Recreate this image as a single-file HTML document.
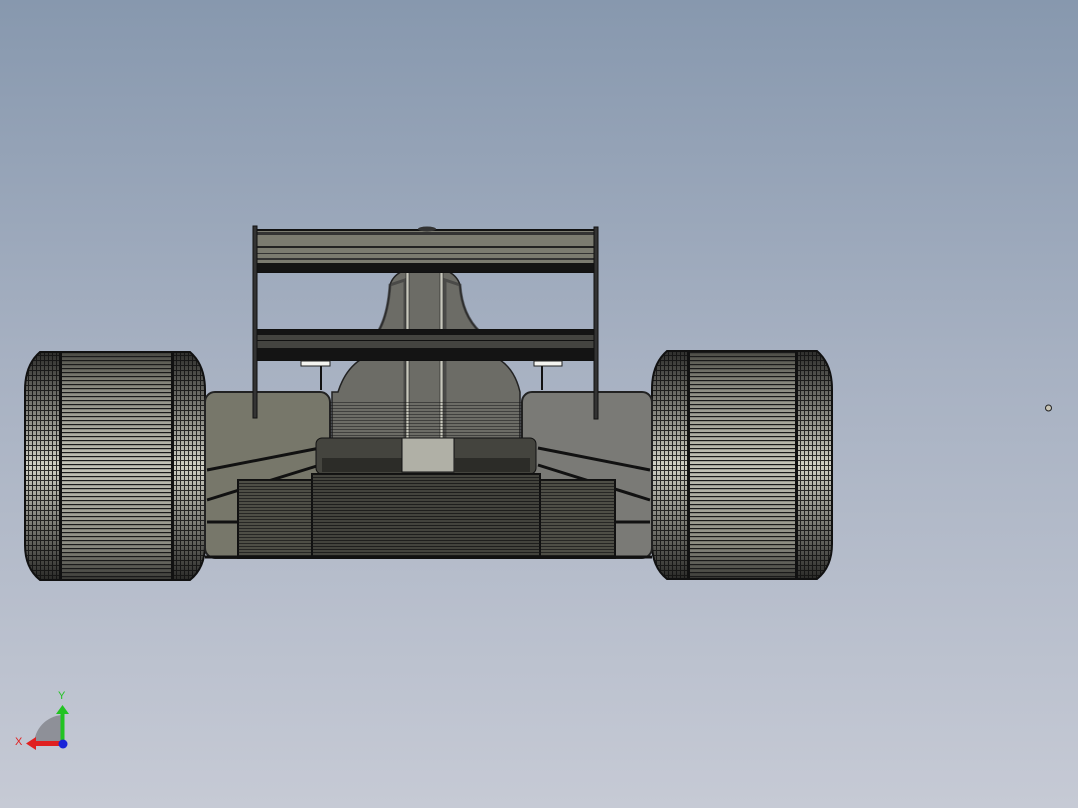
<!DOCTYPE html>
<html><head><meta charset="utf-8"><style>
html,body{margin:0;padding:0;width:1078px;height:808px;overflow:hidden}
body{background:linear-gradient(#8798ae 0%,#a7b1c2 45%,#c6cad5 100%)}
svg{position:absolute;left:0;top:0}
</style></head><body>
<svg width="1078" height="808" viewBox="0 0 1078 808" xmlns="http://www.w3.org/2000/svg">
<defs>
<linearGradient id="band" x1="0" y1="0" x2="0" y2="1">
<stop offset="0" stop-color="#4a4a44"/><stop offset="0.15" stop-color="#8a8a80"/><stop offset="0.5" stop-color="#c4c4b8"/><stop offset="0.85" stop-color="#8a8a80"/><stop offset="1" stop-color="#3a3a36"/></linearGradient>
<linearGradient id="side" x1="0" y1="0" x2="0" y2="1">
<stop offset="0" stop-color="#2e2e2c"/><stop offset="0.5" stop-color="#d0d0c4"/><stop offset="1" stop-color="#2a2a28"/></linearGradient>
<pattern id="hl" width="4" height="4" patternUnits="userSpaceOnUse"><rect width="4" height="1.2" fill="#1a1a1a"/></pattern>
<pattern id="grid" width="4" height="5" patternUnits="userSpaceOnUse"><rect width="4" height="1" fill="#111"/><rect width="1" height="5" fill="#111"/></pattern>
<pattern id="hl2" width="4" height="3" patternUnits="userSpaceOnUse"><rect width="4" height="1" fill="#151515"/></pattern>
</defs>

<!-- left tire -->
<g>
<path d="M40 352 H190 Q205 365 205 390 V545 Q205 568 190 580 H40 Q25 568 25 545 V390 Q25 365 40 352Z" fill="url(#side)"/>
<path d="M40 352 H190 Q205 365 205 390 V545 Q205 568 190 580 H40 Q25 568 25 545 V390 Q25 365 40 352Z" fill="url(#grid)" opacity="0.85"/>
<rect x="60" y="352" width="113" height="228" fill="url(#band)"/>
<rect x="60" y="352" width="113" height="228" fill="url(#hl)"/>
<rect x="59" y="352" width="3" height="228" fill="#111"/><rect x="171" y="352" width="3" height="228" fill="#111"/>
<path d="M40 352 H190 Q205 365 205 390 V545 Q205 568 190 580 H40 Q25 568 25 545 V390 Q25 365 40 352Z" fill="none" stroke="#111" stroke-width="2"/>
</g>
<!-- right tire -->
<g>
<path d="M667 351 H817 Q832 364 832 389 V544 Q832 567 817 579 H667 Q652 567 652 544 V389 Q652 364 667 351Z" fill="url(#side)"/>
<path d="M667 351 H817 Q832 364 832 389 V544 Q832 567 817 579 H667 Q652 567 652 544 V389 Q652 364 667 351Z" fill="url(#grid)" opacity="0.85"/>
<rect x="688" y="351" width="109" height="228" fill="url(#band)"/>
<rect x="688" y="351" width="109" height="228" fill="url(#hl)"/>
<rect x="687" y="351" width="3" height="228" fill="#111"/><rect x="795" y="351" width="3" height="228" fill="#111"/>
<path d="M667 351 H817 Q832 364 832 389 V544 Q832 567 817 579 H667 Q652 567 652 544 V389 Q652 364 667 351Z" fill="none" stroke="#111" stroke-width="2"/>
</g>

<!-- side pods -->
<rect x="205" y="392" width="125" height="166" rx="10" fill="#77776a" stroke="#222" stroke-width="2"/>
<rect x="522" y="392" width="130" height="166" rx="10" fill="#7a7a76" stroke="#222" stroke-width="2"/>
<g stroke="#111" stroke-width="3">
<line x1="207" y1="470" x2="320" y2="448"/><line x1="207" y1="500" x2="320" y2="465"/>
<line x1="650" y1="470" x2="538" y2="448"/><line x1="650" y1="500" x2="538" y2="465"/>
<line x1="207" y1="522" x2="240" y2="522"/><line x1="615" y1="522" x2="650" y2="522"/>
</g>

<!-- engine cover -->
<path d="M338 392 Q345 370 360 360 L378 332 Q388 315 390 285 Q395 268 425 266 Q455 268 460 285 Q462 315 480 332 L500 360 Q515 370 520 392 V440 H332 V392Z" fill="#6c6c66" stroke="#222" stroke-width="1.5"/>
<path d="M378 332 Q388 315 390 285 L405 280 V440 M480 332 Q462 315 460 285 L445 280 V440" fill="none" stroke="#333" stroke-width="3" opacity="0.6"/>
<rect x="406" y="272" width="3" height="168" fill="#c8c8bc" stroke="#222" stroke-width="0.6"/>
<rect x="440" y="272" width="3" height="168" fill="#c8c8bc" stroke="#222" stroke-width="0.6"/>
<rect x="330" y="400" width="192" height="40" fill="url(#hl2)" opacity="0.5"/>

<!-- gearbox -->
<rect x="316" y="438" width="220" height="36" rx="6" fill="#44443e" stroke="#111"/>
<rect x="322" y="458" width="80" height="14" fill="#2c2c28"/><rect x="455" y="458" width="75" height="14" fill="#2c2c28"/>
<rect x="402" y="438" width="52" height="34" fill="#b0b0a6" stroke="#111"/>

<!-- diffuser -->
<rect x="238" y="480" width="377" height="78" fill="#4e4e46" stroke="#111" stroke-width="2"/>
<rect x="238" y="480" width="377" height="78" fill="url(#hl2)" opacity="0.7"/>
<rect x="312" y="474" width="228" height="84" fill="#43433d" stroke="#111" stroke-width="2"/>
<rect x="312" y="474" width="228" height="84" fill="url(#hl2)" opacity="0.8"/>
<line x1="205" y1="557" x2="652" y2="557" stroke="#111" stroke-width="3"/>

<!-- rear wing -->
<rect x="256" y="230" width="340" height="42" fill="#7b7b70" stroke="#111" stroke-width="2"/>
<rect x="256" y="232" width="340" height="3" fill="#333"/>
<rect x="256" y="246" width="340" height="2" fill="#222"/>
<rect x="256" y="253" width="340" height="1" fill="#333"/>
<rect x="256" y="258" width="340" height="2" fill="#333"/>
<rect x="256" y="263" width="340" height="9" fill="#141414"/>
<rect x="256" y="330" width="340" height="30" fill="#444440" stroke="#111" stroke-width="2"/>
<rect x="256" y="330" width="340" height="5" fill="#141414"/>
<rect x="256" y="348" width="340" height="12" fill="#141414"/>
<rect x="256" y="340" width="340" height="1" fill="#111"/>
<rect x="253" y="226" width="4" height="192" fill="#333" stroke="#111"/>
<rect x="594" y="227" width="4" height="192" fill="#333" stroke="#111"/>
<ellipse cx="427" cy="229" rx="9" ry="2.5" fill="#333"/>
<rect x="301" y="361" width="29" height="5" fill="#f4f4f0" stroke="#222"/>
<rect x="534" y="361" width="28" height="5" fill="#f4f4f0" stroke="#222"/>
<rect x="320" y="366" width="2" height="24" fill="#111"/><rect x="541" y="366" width="2" height="24" fill="#111"/>

<!-- point -->
<circle cx="1048.5" cy="408" r="3" fill="#c8c4b4" stroke="#222" stroke-width="1"/>

<!-- triad -->
<path d="M34 745 A30 30 0 0 1 62 715 V745Z" fill="#8e9098"/>
<rect x="60.5" y="712" width="4" height="32" fill="#22c322"/>
<path d="M56 714 L62.5 705 L69 714Z" fill="#22c322"/>
<rect x="36" y="741" width="26" height="5" fill="#e02020"/>
<path d="M36 737 L26 743.5 L36 750Z" fill="#e02020"/>
<circle cx="63" cy="744" r="4.5" fill="#1a24d8"/>
<text x="58" y="699" font-family="Liberation Sans,sans-serif" font-size="11" fill="#22c322">Y</text>
<text x="15" y="745" font-family="Liberation Sans,sans-serif" font-size="11" fill="#e02020">X</text>
</svg>
</body></html>
